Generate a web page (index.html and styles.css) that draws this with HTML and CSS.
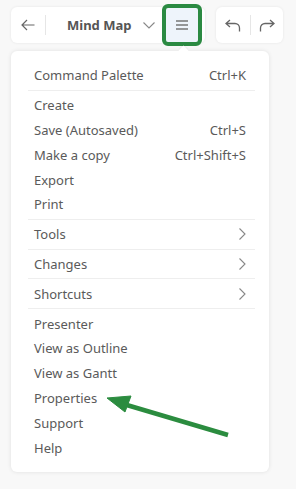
FILE: index.html
```html
<!DOCTYPE html>
<html>
<head>
    <title>Mind Map Menu</title>
    <link rel="stylesheet" href="styles.css">
</head>
<body>
    <div class="toolbar">
        <div class="card main-card">
            <button class="icon-btn back-btn">
                <svg width="14" height="12" viewBox="0 0 14 12"><path d="M13.5 6H1M6 1L1 6l5 5" fill="none" stroke="#666" stroke-width="1.2"/></svg>
            </button>
            <span class="divider"></span>
            <div class="title">Mind Map</div>
            <svg class="caret" width="12" height="7" viewBox="0 0 12 7"><path d="M0.5 0.5L6 6l5.5-5.5" fill="none" stroke="#888" stroke-width="1.1"/></svg>
            <button class="icon-btn menu-btn">
                <svg width="12" height="10" viewBox="0 0 12 10"><path d="M0 1h12M0 5h12M0 9h12" stroke="#777" stroke-width="1.3"/></svg>
            </button>
        </div>
        <div class="card history-card">
            <button class="icon-btn undo-btn">
                <svg width="16" height="13" viewBox="0 0 16 13"><path d="M5 1L1 4.5 5 8M1 4.5h9a4.5 4.5 0 0 1 4.5 4.5v3.5" fill="none" stroke="#666" stroke-width="1.3"/></svg>
            </button>
            <span class="divider"></span>
            <button class="icon-btn redo-btn">
                <svg width="16" height="13" viewBox="0 0 16 13"><path d="M11 1l4 3.5L11 8M15 4.5H6A4.5 4.5 0 0 0 1.5 9v3.5" fill="none" stroke="#666" stroke-width="1.3"/></svg>
            </button>
        </div>
    </div>

    <div class="menu">
        <div class="item"><span>Command Palette</span><span>Ctrl+K</span></div>
        <div class="sep"></div>
        <div class="item"><span>Create</span></div>
        <div class="item"><span>Save (Autosaved)</span><span>Ctrl+S</span></div>
        <div class="item"><span>Make a copy</span><span>Ctrl+Shift+S</span></div>
        <div class="item"><span>Export</span></div>
        <div class="item"><span>Print</span></div>
        <div class="sep"></div>
        <div class="item"><span>Tools</span><svg class="chev" width="7" height="12" viewBox="0 0 7 12"><path d="M0.5 0.5L6 6 0.5 11.5" fill="none" stroke="#888" stroke-width="1.1"/></svg></div>
        <div class="sep"></div>
        <div class="item"><span>Changes</span><svg class="chev" width="7" height="12" viewBox="0 0 7 12"><path d="M0.5 0.5L6 6 0.5 11.5" fill="none" stroke="#888" stroke-width="1.1"/></svg></div>
        <div class="sep"></div>
        <div class="item"><span>Shortcuts</span><svg class="chev" width="7" height="12" viewBox="0 0 7 12"><path d="M0.5 0.5L6 6 0.5 11.5" fill="none" stroke="#888" stroke-width="1.1"/></svg></div>
        <div class="sep"></div>
        <div class="item"><span>Presenter</span></div>
        <div class="item"><span>View as Outline</span></div>
        <div class="item"><span>View as Gantt</span></div>
        <div class="item"><span>Properties</span></div>
        <div class="item"><span>Support</span></div>
        <div class="item"><span>Help</span></div>
    </div>

    <!-- annotation arrow pointing at Properties -->
    <svg class="pointer" width="296" height="489" viewBox="0 0 296 489">
        <path d="M120 403L228 435" stroke="#2b8c3f" stroke-width="4.5" stroke-linecap="butt"/>
        <path d="M107 398L131 396 125 412Z" fill="#2b8c3f" stroke="#2b8c3f" stroke-width="1" stroke-linejoin="round"/>
    </svg>
</body>
</html>
```

FILE: styles.css
```css
body { margin: 0; background: #f8f8f8; font-family: "Noto Sans", "Open Sans", sans-serif; color: #555; position: relative; height: 489px; overflow: hidden; }
.toolbar { display: flex; gap: 13px; padding: 7px 0 0 11px; }
.card { display: flex; align-items: center; height: 36px; background: #fff; border-radius: 6px; box-shadow: 0 0 3px rgba(0,0,0,0.08); }
.main-card { width: 194px; }
.icon-btn { display: flex; align-items: center; justify-content: center; height: 36px; padding: 0; border: none; background: none; }
.back-btn { width: 34px; }
.divider { width: 1px; height: 20px; background: #e6e6e6; }
.title { font-weight: 700; font-size: 13px; color: #555; margin-left: 21px; width: 76px; }
.menu-btn { width: 34px; margin-left: 10px; background: #eef4fb; border-radius: 3px; outline: 4px solid #2b8a42; outline-offset: -1px; }
.history-card { width: 67px; margin-left: -2px; }
.undo-btn { width: 34px; }
.redo-btn { width: 32px; }
.menu { position: relative; width: 258px; margin: 8px 0 0 11px; padding: 12px 0; background: #fff; border-radius: 6px; box-shadow: 0 0 4px rgba(0,0,0,0.1); box-sizing: border-box; height: 421px; }
.menu::before { content: ""; position: absolute; top: -4px; left: 169px; width: 7px; height: 7px; background: #fff; transform: rotate(45deg); box-shadow: -1px -1px 1px rgba(0,0,0,0.04); }
.item { display: flex; align-items: center; justify-content: space-between; height: 24.8px; padding: 0 23px; font-size: 13px; color: #5a5a5a; }
.sep { height: 1px; margin: 2px 14px 2px 17px; background: #eeeeee; }
.pointer { position: absolute; left: 0; top: 0; }
```
